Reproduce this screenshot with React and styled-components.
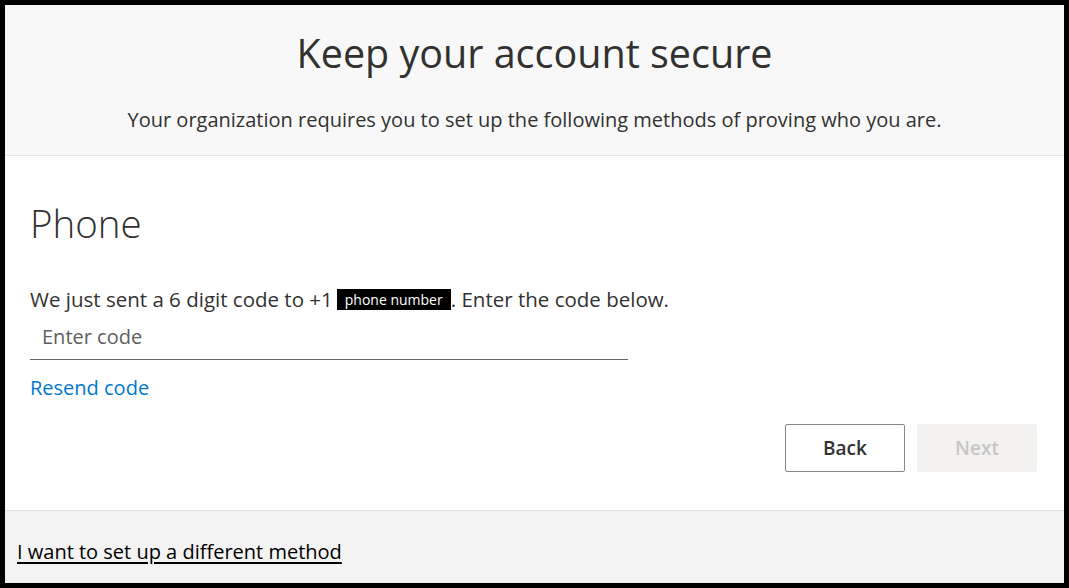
import React from "react";
import styled, { createGlobalStyle } from "styled-components";

const Global = createGlobalStyle`
  html, body { margin: 0; padding: 0; }
  body { font-family: "Open Sans", "Noto Sans", sans-serif; }
  * { box-sizing: border-box; }
`;

const Frame = styled.div`
  width: 1069px;
  height: 588px;
  background: #000;
  padding: 5px;
`;

const Card = styled.div`
  height: 100%;
  background: #fff;
  display: flex;
  flex-direction: column;
`;

const Header = styled.header`
  height: 151px;
  background: #f8f8f8;
  border-bottom: 1px solid #e6e6e6;
  display: flex;
  flex-direction: column;
  align-items: center;
  color: #323130;
`;

const Title = styled.h1`
  margin: 22px 0 0;
  font-size: 39.5px;
  font-weight: 400;
  line-height: 52px;
`;

const Subtitle = styled.p`
  margin: 27px 0 0;
  font-size: 20px;
  line-height: 28px;
`;

const Body = styled.main`
  flex: 1;
  padding: 0 27px 0 25px;
  display: flex;
  flex-direction: column;
  color: #323130;
`;

const Heading = styled.h2`
  margin: 40px 0 0;
  font-size: 38.5px;
  font-weight: 300;
  line-height: 54px;
`;

const Message = styled.p`
  margin: 36px 0 0;
  font-size: 20.5px;
  line-height: 26px;
`;

const Redacted = styled.span`
  display: inline-block;
  background: #000;
  color: #fff;
  font-size: 14px;
  line-height: 21px;
  padding: 0 8px;
  margin-left: 4px;
  vertical-align: 2px;
`;

const CodeInput = styled.input`
  display: block;
  width: 598px;
  height: 47px;
  margin-top: 1px;
  border: none;
  border-bottom: 1px solid #666;
  padding: 0 12px;
  font-family: inherit;
  font-size: 20px;
  color: #323130;
  background: transparent;
  outline: none;
  &::placeholder { color: #605e5c; }
`;

const Link = styled.a`
  display: inline-block;
  margin-top: 15px;
  font-size: 20px;
  line-height: 26px;
  color: #0078d4;
  text-decoration: none;
  align-self: flex-start;
`;

const Actions = styled.div`
  display: flex;
  justify-content: flex-end;
  gap: 12px;
  margin-top: 23px;
`;

const Button = styled.button`
  width: 120px;
  height: 48px;
  border-radius: 2px;
  font-family: inherit;
  font-size: 19px;
  font-weight: 600;
  border: 1px solid ${(p) => (p.$disabled ? "#f3f2f1" : "#8a8886")};
  background: ${(p) => (p.$disabled ? "#f3f2f1" : "#fff")};
  color: ${(p) => (p.$disabled ? "#c8c6c4" : "#323130")};
`;

const Footer = styled.footer`
  height: 73px;
  background: #f3f3f3;
  border-top: 1px solid #e3e3e3;
  display: flex;
  align-items: center;
  padding: 8px 12px 0;
`;

const FooterLink = styled.a`
  font-size: 20px;
  color: #000;
  text-decoration: underline;
  text-underline-offset: 3px;
`;

export default function App() {
  return (
    <>
      <Global />
      <Frame>
        <Card>
          <Header>
            <Title>Keep your account secure</Title>
            <Subtitle>
              Your organization requires you to set up the following methods of proving who you are.
            </Subtitle>
          </Header>
          <Body>
            <Heading>Phone</Heading>
            <Message>
              We just sent a 6 digit code to +1<Redacted>phone number</Redacted>. Enter the code below.
            </Message>
            <CodeInput placeholder="Enter code" />
            <Link href="#">Resend code</Link>
            <Actions>
              <Button>Back</Button>
              <Button $disabled disabled>Next</Button>
            </Actions>
          </Body>
          <Footer>
            <FooterLink href="#">I want to set up a different method</FooterLink>
          </Footer>
        </Card>
      </Frame>
    </>
  );
}
